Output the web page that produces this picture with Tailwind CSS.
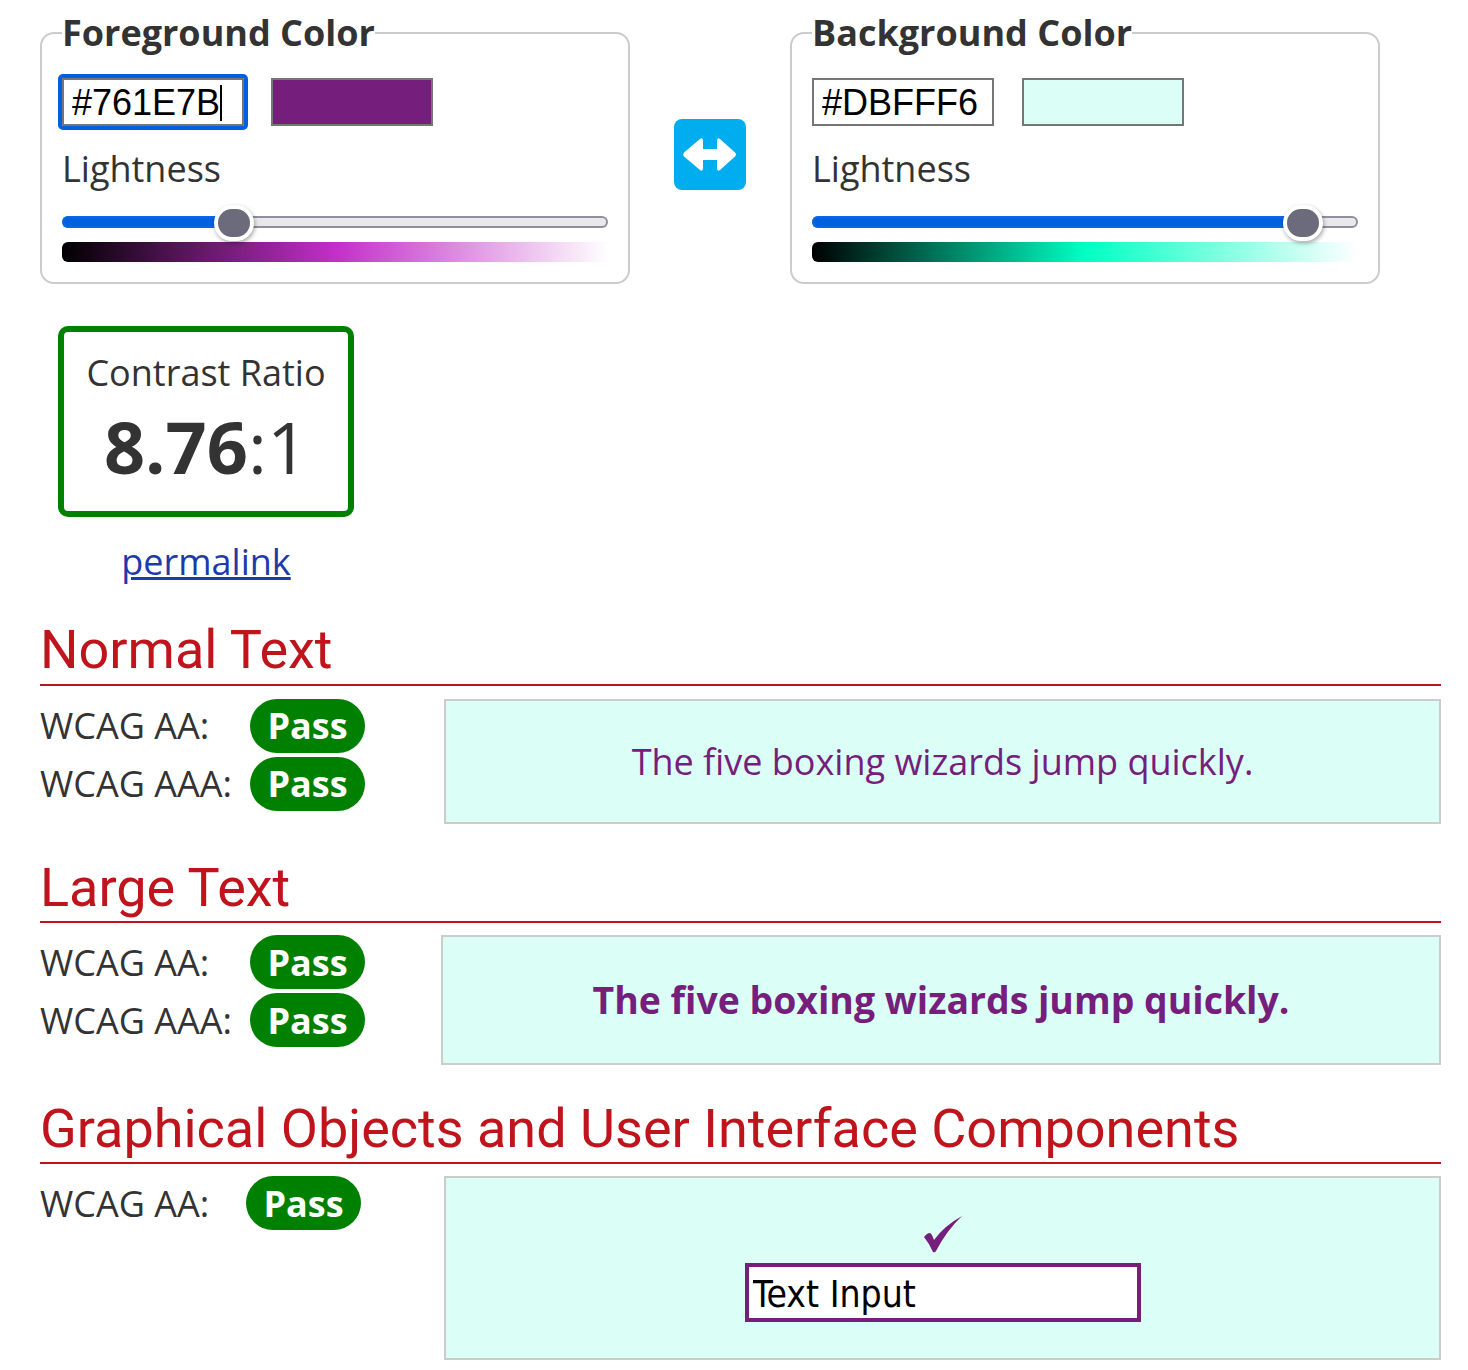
<!DOCTYPE html>
<html lang="en">

<head>
    <meta charset="UTF-8">
    <script src="https://cdn.jsdelivr.net/npm/@tailwindcss/browser@4"></script>
    <title>Contrast Checker</title>
</head>

<body class="bg-white text-[#333] font-['Open_Sans',sans-serif]">
    <main class="w-[1441px] pl-10 pt-2.5 h-[1370px] overflow-hidden">
        <!-- colour pickers -->
        <div class="flex items-start">
            <fieldset class="w-[590px] h-[274px] border-2 border-[#ccc] rounded-[14px]">
                <legend class="ml-5 text-[36px] leading-[46px] font-bold">Foreground Color</legend>
                <div class="flex items-center gap-[27px] ml-5 mt-[22px] h-12">
                    <div class="relative">
                        <input type="text" value="#761E7B"
                            class="w-[182px] h-12 border-2 border-[#767676] bg-white px-2 pt-[2px] text-[36px] text-black font-['Liberation_Sans',sans-serif] outline-4 outline-[#0060df] rounded-[1px]">
                        <span class="absolute left-[158px] top-[7px] w-[2px] h-[36px] bg-black"></span>
                    </div>
                    <div class="w-[162px] h-12 border-2 border-[#767676] bg-[#761E7B]"></div>
                </div>
                <div class="ml-5 mt-[18px] text-[36px] leading-[50px]">Lightness</div>
                <div class="relative ml-5 mt-[22px] w-[546px] h-3 rounded-full bg-[#e9e9ed] border-2 border-[#8f8f9d]">
                    <div class="w-[160px] h-full -my-0.5 box-content border-y-2 border-l-2 -ml-0.5 border-[#0a66e4] rounded-l-full bg-[#0060df]"></div>
                    <span class="absolute left-[150px] -top-[13px] w-10 h-9 rounded-full bg-[#6b6b7b] border-4 border-white shadow-[1px_2px_4px_rgba(0,0,0,0.35)]"></span>
                </div>
                <div class="ml-5 mt-[14px] w-[546px] h-5 rounded-l-md bg-linear-to-r/srgb from-black via-[#c22fc9] to-white"></div>
            </fieldset>

            <button class="ml-11 mt-[109px] w-[72px] h-[71px] rounded-lg bg-[#00adef] flex items-center justify-center">
                <svg width="72" height="71" viewBox="0 0 72 71" fill="#fff">
                    <path d="M10 33.5 L26 20 Q29 18 29 22 V30 H43 V22 Q43 18 46 20 L61 33.5 Q63 35.5 61 37.5 L46 51 Q43 53 43 49 V41 H29 V49 Q29 53 26 51 L10 37.5 Q8.500 35.5 10 33.5 Z" />
                </svg>
            </button>

            <fieldset class="ml-11 w-[590px] h-[274px] border-2 border-[#ccc] rounded-[14px]">
                <legend class="ml-5 text-[36px] leading-[46px] font-bold">Background Color</legend>
                <div class="flex items-center gap-7 ml-5 mt-[22px] h-12">
                    <input type="text" value="#DBFFF6"
                        class="w-[182px] h-12 border-2 border-[#767676] bg-white px-2 pt-[2px] text-[36px] text-black font-['Liberation_Sans',sans-serif]">
                    <div class="w-[162px] h-12 border-2 border-[#767676] bg-[#DBFFF6]"></div>
                </div>
                <div class="ml-5 mt-[18px] text-[36px] leading-[50px]">Lightness</div>
                <div class="relative ml-5 mt-[22px] w-[546px] h-3 rounded-full bg-[#e9e9ed] border-2 border-[#8f8f9d]">
                    <div class="w-[478px] h-full -my-0.5 box-content border-y-2 border-l-2 -ml-0.5 border-[#0a66e4] rounded-l-full bg-[#0060df]"></div>
                    <span class="absolute left-[469px] -top-[13px] w-10 h-9 rounded-full bg-[#6b6b7b] border-4 border-white shadow-[1px_2px_4px_rgba(0,0,0,0.35)]"></span>
                </div>
                <div class="ml-5 mt-[14px] w-[546px] h-5 rounded-l-md bg-linear-to-r/srgb from-black via-[#00ffc3] to-white"></div>
            </fieldset>
        </div>

        <!-- ratio -->
        <div class="ml-[18px] mt-[42px] w-[296px]">
            <div class="h-[191px] border-[6px] border-[#008000] rounded-[10px] flex flex-col items-center">
                <div class="mt-[18px] text-[36px] leading-[46px]">Contrast Ratio</div>
                <div class="mt-[5px] text-[72px] leading-[90px] whitespace-nowrap"><span class="font-bold">8.76</span>:1</div>
            </div>
            <div class="mt-5 text-center text-[36px] leading-[50px]"><a href="#" class="text-[#1c3aa9] underline">permalink</a></div>
        </div>

        <!-- normal text -->
        <h2 class="mt-[39px] h-[60px] border-b-2 border-[#c0141d] text-[#c0141d] font-['Roboto',sans-serif] text-[54px] leading-[48px]">Normal Text</h2>
        <div class="flex mt-[13px]">
            <div class="w-[404px] shrink-0 flex flex-col gap-1">
                <div class="flex items-center text-[36px]"><span class="w-[210px]">WCAG AA:</span><span class="w-[115px] h-[54px] rounded-full bg-[#008000] text-white font-bold flex items-center justify-center">Pass</span></div>
                <div class="flex items-center text-[36px]"><span class="w-[210px]">WCAG AAA:</span><span class="w-[115px] h-[54px] rounded-full bg-[#008000] text-white font-bold flex items-center justify-center">Pass</span></div>
            </div>
            <div class="flex-1 h-[125px] border-2 border-[#ccc] bg-[#DBFFF6] text-[#761E7B] text-[36px] flex items-center justify-center">The five boxing wizards jump quickly.</div>
        </div>

        <!-- large text -->
        <h2 class="mt-[39px] h-[60px] border-b-2 border-[#c0141d] text-[#c0141d] font-['Roboto',sans-serif] text-[54px] leading-[50px]">Large Text</h2>
        <div class="flex mt-3">
            <div class="w-[401px] shrink-0 flex flex-col gap-1">
                <div class="flex items-center text-[36px] leading-[50px]"><span class="w-[210px] pt-[2px]">WCAG AA:</span><span class="w-[115px] h-[54px] pt-[2px] rounded-full bg-[#008000] text-white font-bold flex items-center justify-center">Pass</span></div>
                <div class="flex items-center text-[36px] leading-[50px]"><span class="w-[210px] pt-[2px]">WCAG AAA:</span><span class="w-[115px] h-[54px] pt-[2px] rounded-full bg-[#008000] text-white font-bold flex items-center justify-center">Pass</span></div>
            </div>
            <div class="flex-1 h-[130px] border-2 border-[#ccc] bg-[#DBFFF6] text-[#761E7B] text-[37.4px] font-bold flex items-center justify-center">The five boxing wizards jump quickly.</div>
        </div>

        <!-- ui components -->
        <h2 class="mt-[39px] h-[60px] border-b-2 border-[#c0141d] text-[#c0141d] font-['Roboto',sans-serif] text-[54px] leading-[50px]">Graphical Objects and User Interface Components</h2>
        <div class="flex mt-3">
            <div class="w-[404px] shrink-0">
                <div class="flex items-center text-[36px] leading-[50px]"><span class="w-[206px] pt-[2px]">WCAG AA:</span><span class="w-[115px] h-[54px] pt-[2px] rounded-full bg-[#008000] text-white font-bold flex items-center justify-center">Pass</span></div>
            </div>
            <div class="flex-1 h-[184px] border-2 border-[#ccc] bg-[#DBFFF6] flex flex-col items-center">
                <svg class="mt-[37px] shrink-0" width="40" height="40" viewBox="0 0 40 40" fill="#761E7B">
                    <path d="M1 22 Q4 18 7 18 Q9 19 11 25 Q21 11 39 1 Q24 15 13 36 Q12 38 10 37 Q6 28 1 22 Z" />
                </svg>
                <input type="text" value="Text Input"
                    class="mt-2 w-[396px] h-[59px] border-4 border-[#761E7B] bg-white px-1 pt-1 text-[37px] font-stretch-condensed text-black font-['DejaVu_Sans',sans-serif]">
            </div>
        </div>
    </main>
</body>

</html>
